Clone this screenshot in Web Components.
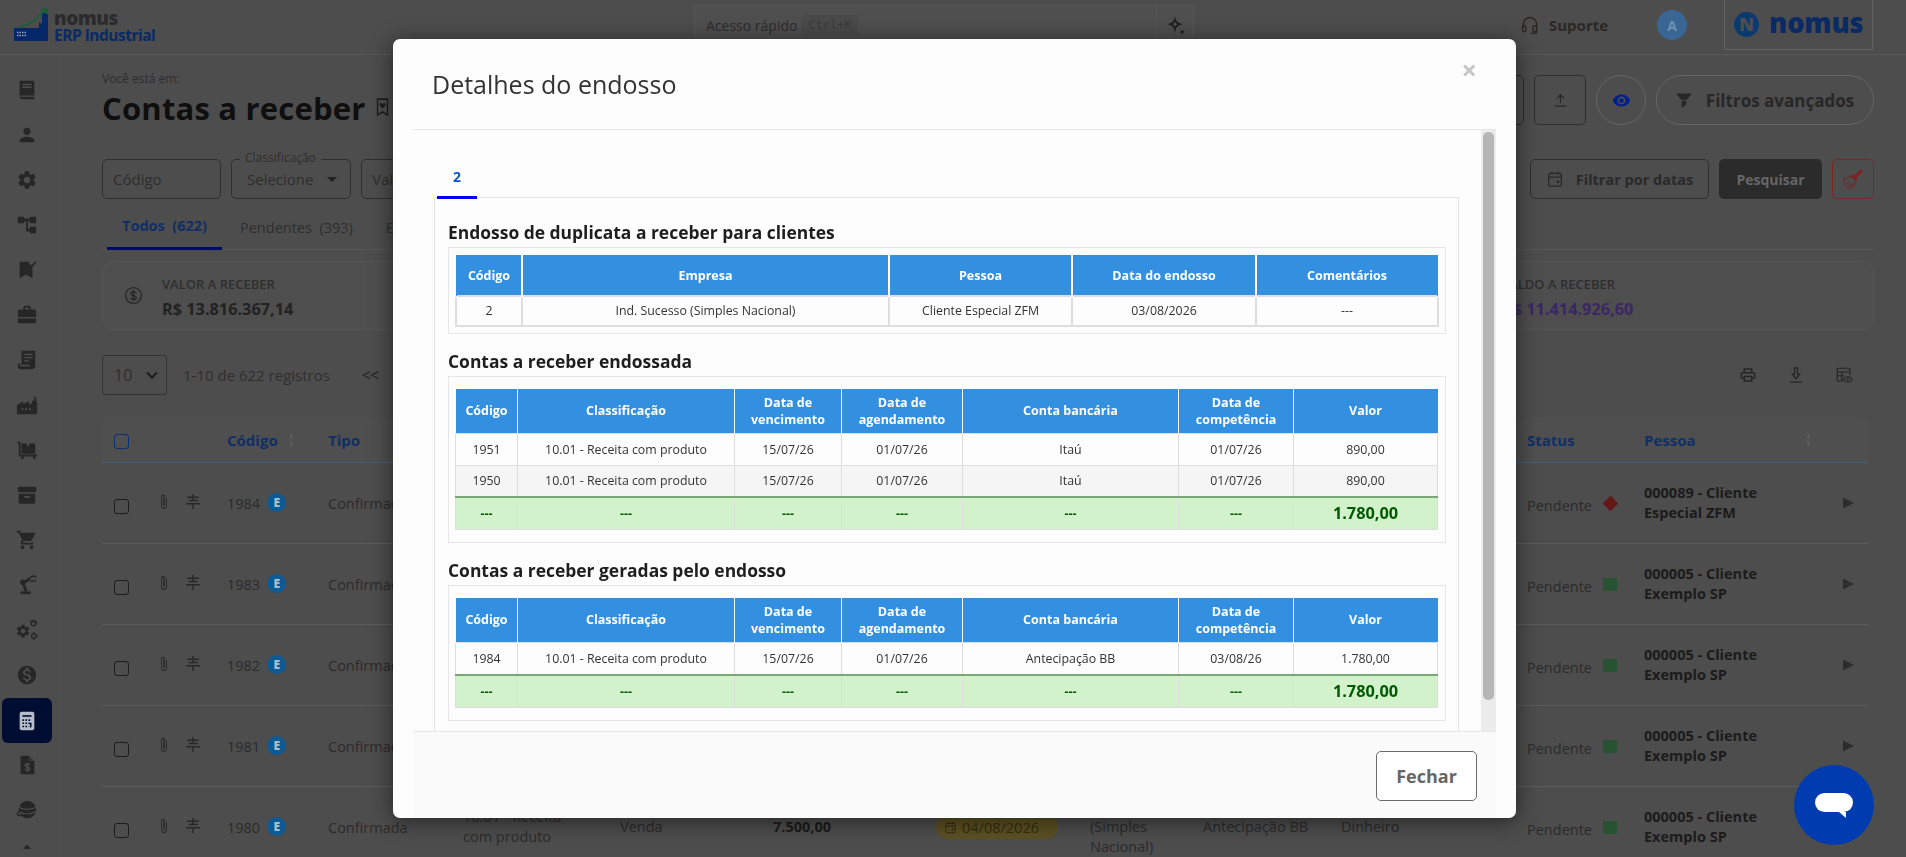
<!DOCTYPE html>
<html lang="pt-BR">
<head>
<meta charset="utf-8">
<title>Contas a receber</title>
<style>
  :root {
    --page: #4d4d4d;
    --line: #5a5a5a;
    --text: #2b2b2b;
    --strong: #1b1b1b;
    --navy: #0f2f66;
    --icon: #262626;
    font-family: "Open Sans", sans-serif;
  }
  html, body { margin: 0; height: 857px; overflow: hidden; background: var(--page); }
  nomus-app { font-family: "Open Sans", sans-serif; }
</style>
</head>
<body>

<nomus-app>
  <app-topbar slot="top"></app-topbar>
  <app-sidebar slot="side"></app-sidebar>

  <page-header></page-header>
  <filter-bar></filter-bar>
  <status-tabs></status-tabs>
  <summary-card></summary-card>
  <list-toolbar></list-toolbar>

  <receivable-table>
    <receivable-row code="1984" person="000089 - Cliente Especial ZFM" mark="diamond"></receivable-row>
    <receivable-row code="1983" person="000005 - Cliente Exemplo SP"></receivable-row>
    <receivable-row code="1982" person="000005 - Cliente Exemplo SP"></receivable-row>
    <receivable-row code="1981" person="000005 - Cliente Exemplo SP"></receivable-row>
    <receivable-row code="1980" person="000005 - Cliente Exemplo SP" full></receivable-row>
  </receivable-table>
</nomus-app>

<endosso-modal>
  <span slot="title">Detalhes do endosso</span>

  <endosso-section heading="Endosso de duplicata a receber para clientes" style="--pad:7px 7px 6px 6px">
    <endosso-table thick widths="66,367,183,184,182"
      head='["Código","Empresa","Pessoa","Data do endosso","Comentários"]'
      rows='[["2","Ind. Sucesso (Simples Nacional)","Cliente Especial ZFM","03/08/2026","---"]]'></endosso-table>
  </endosso-section>

  <endosso-section heading="Contas a receber endossada">
    <endosso-table widths="62,217,107,121,216,115,144"
      head='["Código","Classificação","Data de vencimento","Data de agendamento","Conta bancária","Data de competência","Valor"]'
      rows='[["1951","10.01 - Receita com produto","15/07/26","01/07/26","Itaú","01/07/26","890,00"],["1950","10.01 - Receita com produto","15/07/26","01/07/26","Itaú","01/07/26","890,00"]]'
      total="1.780,00"></endosso-table>
  </endosso-section>

  <endosso-section heading="Contas a receber geradas pelo endosso">
    <endosso-table widths="62,217,107,121,216,115,144"
      head='["Código","Classificação","Data de vencimento","Data de agendamento","Conta bancária","Data de competência","Valor"]'
      rows='[["1984","10.01 - Receita com produto","15/07/26","01/07/26","Antecipação BB","03/08/26","1.780,00"]]'
      total="1.780,00"></endosso-table>
  </endosso-section>
</endosso-modal>

<chat-button></chat-button>

<script>
const ICONS = {
  book: '<path fill="currentColor" d="M5 2h14a1 1 0 0 1 1 1v18a1 1 0 0 1-1 1H6a2.4 2.4 0 0 1-2-2V3a1 1 0 0 1 1-1z"/><path stroke="#4d4d4d" stroke-width="1.4" fill="none" d="M7 6h10M7 9h10M4.5 18.6H20"/>',
  person: '<path fill="currentColor" d="M12 12c2.21 0 4-1.79 4-4s-1.79-4-4-4-4 1.79-4 4 1.79 4 4 4zm0 2c-2.67 0-8 1.34-8 4v2h16v-2c0-2.66-5.33-4-8-4z"/>',
  gear: '<path fill="currentColor" d="M19.14 12.94c.04-.3.06-.61.06-.94 0-.32-.02-.64-.07-.94l2.03-1.58c.18-.14.23-.41.12-.61l-1.92-3.32c-.12-.22-.37-.29-.59-.22l-2.39.96c-.5-.38-1.03-.7-1.62-.94l-.36-2.54c-.04-.24-.24-.41-.48-.41h-3.84c-.24 0-.43.17-.47.41l-.36 2.54c-.59.24-1.13.57-1.62.94l-2.39-.96c-.22-.08-.47 0-.59.22L2.74 8.87c-.12.21-.08.47.12.61l2.03 1.58c-.05.3-.09.63-.09.94s.02.64.07.94l-2.03 1.58c-.18.14-.23.41-.12.61l1.92 3.32c.12.22.37.29.59.22l2.39-.96c.5.38 1.03.7 1.62.94l.36 2.54c.05.24.24.41.48.41h3.84c.24 0 .44-.17.47-.41l.36-2.54c.59-.24 1.13-.56 1.62-.94l2.39.96c.22.08.47 0 .59-.22l1.92-3.32c.12-.22.07-.47-.12-.61l-2.01-1.58zM12 15.6c-1.98 0-3.6-1.62-3.6-3.6s1.62-3.6 3.6-3.6 3.6 1.62 3.6 3.6-1.62 3.6-3.6 3.6z"/>',
  tree: '<path fill="currentColor" d="M2 4a1 1 0 0 1 1-1h5a1 1 0 0 1 1 1v1h6V4a1 1 0 0 1 1-1h5a1 1 0 0 1 1 1v5a1 1 0 0 1-1 1h-5a1 1 0 0 1-1-1V8h-2v8h2v-1a1 1 0 0 1 1-1h5a1 1 0 0 1 1 1v5a1 1 0 0 1-1 1h-5a1 1 0 0 1-1-1v-1h-4V8H9v1a1 1 0 0 1-1 1H3a1 1 0 0 1-1-1z"/>',
  bookcheck: '<path fill="currentColor" d="M4 3h10v3l3 4h1v11l-7-4-7 4z"/><path fill="none" stroke="currentColor" stroke-width="2" d="M14.5 6l2.5 2.5L21.5 3"/>',
  work: '<path fill="currentColor" d="M20 6h-4V4c0-1.1-.9-2-2-2h-4c-1.1 0-2 .9-2 2v2H4c-1.1 0-2 .9-2 2v11c0 1.1.9 2 2 2h16c1.1 0 2-.9 2-2V8c0-1.1-.9-2-2-2zm-6 0h-4V4h4v2z"/><path stroke="#4d4d4d" stroke-width="1.5" d="M2 15h20"/>',
  receipt: '<path fill="currentColor" d="M6 2h15v16a4 4 0 0 1-4 4H5a3 3 0 0 1-3-3v-3h4z"/><path stroke="#4d4d4d" stroke-width="1.4" fill="none" d="M9 6h9M9 9.5h9M9 13h5M4 18h11"/>',
  factory: '<path fill="currentColor" d="M1 22v-9a2 2 0 0 1 2-2l5-3v3l6-3v3h3l1-4h2V3h2v4l1 4v11z"/><path stroke="#4d4d4d" stroke-width="2" stroke-dasharray="2 2" d="M6 16.5h10"/>',
  trolley: '<path fill="none" stroke="currentColor" stroke-width="2" d="M1.5 4H4v14h19"/><path fill="currentColor" d="M6 5h6v3h2V5h7v11H6z"/><circle cx="7" cy="20.5" r="1.6" fill="currentColor"/><circle cx="20" cy="20.5" r="1.6" fill="currentColor"/>',
  archive: '<rect fill="currentColor" x="2" y="3" width="20" height="6" rx="1.5"/><path fill="currentColor" d="M3 10.5h18V20a1.5 1.5 0 0 1-1.5 1.5h-15A1.5 1.5 0 0 1 3 20z"/><path stroke="#4d4d4d" stroke-width="2" d="M9 14h6"/>',
  cart: '<path fill="currentColor" d="M7 18c-1.1 0-1.99.9-1.99 2S5.9 22 7 22s2-.9 2-2-.9-2-2-2zM1 2v2h2l3.6 7.59-1.35 2.45c-.16.28-.25.61-.25.96 0 1.1.9 2 2 2h12v-2H7.42c-.14 0-.25-.11-.25-.25l.03-.12.9-1.63h7.45c.75 0 1.41-.41 1.75-1.03l3.58-6.49c.08-.14.12-.31.12-.48 0-.55-.45-1-1-1H5.21l-.94-2H1zm16 16c-1.1 0-1.99.9-1.99 2s.89 2 1.99 2 2-.9 2-2-.9-2-2-2z"/>',
  robot: '<path fill="currentColor" d="M5 19h11v3H5z"/><path fill="none" stroke="currentColor" stroke-width="3.2" d="M11 19L8 10l7-5"/><circle cx="7.5" cy="9" r="3" fill="currentColor"/><path fill="none" stroke="currentColor" stroke-width="1.6" d="M15 5c1-3 5-3.5 7-1.5M15.5 7.5c2 1 5 .5 6-1"/>',
  gears: '<g transform="translate(-1 4.5) scale(.72)"><path fill="currentColor" d="M19.14 12.94c.04-.3.06-.61.06-.94 0-.32-.02-.64-.07-.94l2.03-1.58c.18-.14.23-.41.12-.61l-1.92-3.32c-.12-.22-.37-.29-.59-.22l-2.39.96c-.5-.38-1.03-.7-1.62-.94l-.36-2.54c-.04-.24-.24-.41-.48-.41h-3.84c-.24 0-.43.17-.47.41l-.36 2.54c-.59.24-1.13.57-1.62.94l-2.39-.96c-.22-.08-.47 0-.59.22L2.74 8.87c-.12.21-.08.47.12.61l2.03 1.58c-.05.3-.09.63-.09.94s.02.64.07.94l-2.03 1.58c-.18.14-.23.41-.12.61l1.92 3.32c.12.22.37.29.59.22l2.39-.96c.5.38 1.03.7 1.62.94l.36 2.54c.05.24.24.41.48.41h3.84c.24 0 .44-.17.47-.41l.36-2.54c.59-.24 1.13-.56 1.62-.94l2.39.96c.22.08.47 0 .59-.22l1.92-3.32c.12-.22.07-.47-.12-.61l-2.01-1.58zM12 15.6c-1.98 0-3.6-1.62-3.6-3.6s1.62-3.6 3.6-3.6 3.6 1.62 3.6 3.6-1.62 3.6-3.6 3.6z"/></g><g fill="none" stroke="currentColor" stroke-width="1.5"><circle cx="19" cy="5" r="2.5"/><circle cx="19.5" cy="18.5" r="2.5"/><path stroke-dasharray="1.5 1.5" stroke-width="2" d="M19 .8v1M23 5h-1M16 2l.8.8M22 2l-.8.8M19.5 14.5v1M23.5 18.5h-1M19.5 22.5v-1"/></g>',
  dollar: '<path fill="currentColor" d="M12 2C6.48 2 2 6.48 2 12s4.48 10 10 10 10-4.48 10-10S17.52 2 12 2zm1.41 16.09V20h-2.67v-1.93c-1.71-.36-3.16-1.46-3.27-3.4h1.96c.1 1.05.82 1.87 2.65 1.87 1.96 0 2.4-.98 2.4-1.59 0-.83-.44-1.61-2.67-2.14-2.48-.6-4.18-1.62-4.18-3.67 0-1.72 1.39-2.84 3.11-3.21V4h2.67v1.95c1.86.45 2.79 1.86 2.87 3.39H14.3c-.05-1.11-.64-1.87-2.22-1.87-1.5 0-2.4.68-2.4 1.64 0 .84.65 1.39 2.67 1.91s4.18 1.39 4.18 3.91c-.01 1.83-1.38 2.83-3.12 3.16z"/>',
  dollarline: '<circle cx="12" cy="12" r="10" fill="none" stroke="currentColor" stroke-width="1.6"/><path fill="none" stroke="currentColor" stroke-width="1.6" d="M15.5 9c-.3-1.5-1.7-2-3.5-2-2 0-3.3 1-3.3 2.5 0 3.5 6.8 1.8 6.8 5 0 1.5-1.4 2.5-3.5 2.5-2 0-3.4-.7-3.6-2.3M12 5v14"/>',
  calc: '<rect x="4" y="2" width="16" height="20" rx="2" fill="currentColor"/><path stroke="#000d33" stroke-width="1.8" fill="none" d="M7 6.5h10"/><path stroke="#000d33" stroke-width="1.8" stroke-dasharray="1.8 1.5" fill="none" d="M7 11h10M7 14.5h10M7 18h7"/><path stroke="#000d33" stroke-width="1.8" d="M16 14v5"/>',
  docdollar: '<path fill="currentColor" d="M6 2h8l6 6v13a1 1 0 0 1-1 1H6a1 1 0 0 1-1-1V3a1 1 0 0 1 1-1z"/><path fill="none" stroke="#4d4d4d" stroke-width="1.5" d="M15 12c-.5-1-1.5-1.3-2.5-1.3-1.5 0-2.5.7-2.5 1.8 0 2.4 5 1.2 5 3.4 0 1.1-1 1.8-2.5 1.8-1.1 0-2.2-.4-2.6-1.5M12.5 9.5v10"/><path fill="#4d4d4d" d="M14 2v6h6z" opacity=".45"/>',
  planet: '<circle cx="12.5" cy="11.5" r="9.5" fill="currentColor"/><path fill="none" stroke="#4d4d4d" stroke-width="1.5" d="M3 9c5 3 13 3 19 0M3.5 14c5 3 12 3 18.5-.5"/><path fill="none" stroke="currentColor" stroke-width="1.5" d="M4 13c-2.5 2-3 4-2 4.5 2 1 6 .5 11-1"/>',
  up: '<path fill="currentColor" d="M12 7l8 9H4z"/>',
  bookmarkheart: '<path fill="none" stroke="currentColor" stroke-width="2" d="M5 2.5h14v19l-7-3.5-7 3.5z"/><path fill="currentColor" d="M12 14l-3.7-3.6c-1.6-1.8.9-4.2 2.7-2.6l1 1 1-1c1.8-1.6 4.3.8 2.7 2.6z"/>',
  upload: '<path fill="none" stroke="currentColor" stroke-width="1.7" d="M12 16V4M7 9l5-5 5 5M4 20h16"/>',
  eye: '<path fill="currentColor" d="M12 4.5C7 4.5 2.73 7.61 1 12c1.73 4.39 6 7.5 11 7.5s9.27-3.11 11-7.5c-1.73-4.39-6-7.5-11-7.5zM12 17c-2.76 0-5-2.24-5-5s2.24-5 5-5 5 2.24 5 5-2.24 5-5 5zm0-8c-1.66 0-3 1.34-3 3s1.34 3 3 3 3-1.34 3-3-1.34-3-3-3z"/>',
  funnel: '<path fill="currentColor" d="M0 2h24l-8 9H8z"/><path fill="currentColor" d="M8.5 12.5h7v5l-7 5z"/>',
  calendar: '<g fill="none" stroke="currentColor" stroke-width="1.8"><rect x="3.5" y="4.5" width="17" height="17" rx="1.5"/><path d="M3.5 9.5h17M8 2v4M16 2v4"/></g><circle cx="16" cy="15.5" r="2" fill="currentColor"/>',
  broom: '<path fill="#7e2222" d="M14 7.5L20.5 1 23 3.5 16.5 10l.6 1.5-2.2 2.2-5-5L12.2 6.5z"/><path fill="none" stroke="#6c2c2c" stroke-width="1.2" d="M9.5 9C7 11 4 12 1 12c.5 4 4 10 8 11 3-2 5.5-5 6-9zM5 17l3-2M7.5 20.5l3-3.5M11 21l2-4"/>',
  headset: '<g fill="none" stroke="currentColor" stroke-width="1.8"><path d="M4 15v-4a8 8 0 0 1 16 0v4"/><rect x="3" y="13" width="4" height="7" rx="2"/><rect x="15.5" y="13" width="4.5" height="7" rx="2"/><path d="M20 18v2a2 2 0 0 1-2 2h-5"/></g>',
  sparkle: '<path fill="currentColor" d="M12 1c.7 6 2.5 8.5 9 10-6.5 1.5-8.3 4-9 11-.7-7-2.5-9.5-9-11 6.5-1.5 8.3-4 9-10z"/><path fill="#4d4d4d" d="M12 7c.4 2.5 1.2 3.4 3.5 4-2.3.6-3.1 1.5-3.5 4.5-.4-3-1.2-3.9-3.5-4.5 2.3-.6 3.1-1.5 3.5-4z"/><path fill="currentColor" d="M20 18h1.5v1.5H23V21h-1.5v1.5H20V21h-1.5v-1.5H20z"/>',
  print: '<path fill="currentColor" d="M19 8h-1V3H6v5H5c-1.66 0-3 1.34-3 3v6h4v4h12v-4h4v-6c0-1.66-1.34-3-3-3zM8 5h8v3H8V5zm8 12v2H8v-4h8v2zm2-2v-2H6v2H4v-4c0-.55.45-1 1-1h14c.55 0 1 .45 1 1v4h-2z"/>',
  download: '<path fill="none" stroke="currentColor" stroke-width="1.8" d="M10 2.5h4V11h3l-5 6-5-6h3zM4 21.5h16"/>',
  tableeye: '<g fill="none" stroke="currentColor" stroke-width="1.6"><path d="M11 20H4a1 1 0 0 1-1-1V4a1 1 0 0 1 1-1h15a1 1 0 0 1 1 1v8M3 8h17M3 13h9M9 8v12"/><path d="M11 18c3-4.5 9-4.5 12 0-3 4.5-9 4.5-12 0z"/></g><circle cx="17" cy="18" r="1.5" fill="currentColor"/>',
  clip: '<path fill="currentColor" d="M19 6v11a7 7 0 0 1-14 0V6a5 5 0 0 1 10 0v10.5a2.5 2.5 0 0 1-5 0V6h2v10.5a.5.5 0 0 0 1 0V6a3 3 0 0 0-6 0v11a5 5 0 0 0 10 0V6z"/>',
  signpost: '<path fill="none" stroke="currentColor" stroke-width="2.4" d="M12 0v5M2 5h20M5 10.5h15M0 15.5h24M12 15.5V24M12 5v5.5"/>',
  play: '<path fill="currentColor" d="M0 1l24 11L0 23z"/>',
  sort: '<path fill="currentColor" d="M12 2l5 8H7zM12 22l-5-8h10z"/>',
};

// small helper, every component goes through this
function define(tag, css, html) {
  customElements.define(tag, class extends HTMLElement {
    constructor() {
      super();
      this.attachShadow({ mode: 'open' });
    }
    connectedCallback() {
      const markup = typeof html === 'function' ? html(this) : html;
      this.shadowRoot.innerHTML = `<style>${css}</style>${markup}`;
    }
  });
}

define('ui-icon', `
  :host { display: inline-flex; width: var(--s, 20px); height: var(--h, var(--s, 20px)); flex: none; }
  svg { width: 100%; height: 100%; display: block; }
`, el => `<svg viewBox="0 0 24 24" preserveAspectRatio="none">${ICONS[el.getAttribute('name')] || ''}</svg>`);

define('nomus-app', `
  :host { display: grid; grid-template-columns: 61px 1fr; grid-template-rows: 55px 802px; width: 1906px; height: 857px; overflow: hidden; color: var(--text); }
  ::slotted([slot=top]) { grid-column: 1 / 3; }
  main { padding: 0 32px 0 41px; min-width: 0; overflow: hidden; }
`, `<slot name="top"></slot><slot name="side"></slot><main><slot></slot></main>`);

define('app-topbar', `
  :host { display: flex; align-items: flex-start; height: 55px; border-bottom: 1px solid #575757; box-sizing: border-box; }
  .brand { display: flex; gap: 6px; padding: 7px 0 0 14px; width: 680px; box-sizing: border-box; }
  .brand svg { width: 34px; height: 34px; }
  .names { display: flex; flex-direction: column; font-weight: 800; padding-top: 3px; }
  .nomus { font-size: 19px; color: #2b2b2b; letter-spacing: -.5px; line-height: 17px; }
  .erp { font-size: 15.5px; font-weight: 700; color: #082a66; letter-spacing: -.5px; line-height: 16px; }
  .quick { display: flex; width: 500px; height: 40px; margin: 5px 0 0 14px; border: 1px solid #555; border-radius: 4px; box-sizing: border-box; background: #4f4f4f; align-items: center; }
  .quick span { font-size: 14px; margin-left: 11px; color: #2c2c2c; }
  .quick code { font: 12px "DejaVu Sans Mono", monospace; color: #3a3a3a; background: #4a4a4a; margin-left: 5px; padding: 3px 6px; border-radius: 3px; }
  .star { margin-left: auto; width: 36px; height: 100%; border-left: 1px solid #555; display: flex; align-items: center; justify-content: center; color: #1d1d1d; }
  .support { display: flex; align-items: center; gap: 9px; margin: 15px 0 0 326px; font-size: 15px; font-weight: 700; color: #2b2723; --s: 20px; }
  .avatar { width: 30px; height: 30px; margin: 10px 0 0 49px; border-radius: 50%; background: #396694; color: #6f8fb0; display: flex; align-items: center; justify-content: center; font-size: 14px; font-weight: 700; }
  .mark { display: flex; align-items: center; gap: 10px; width: 149px; height: 50px; margin-left: 37px; border: 1px solid #636363; border-top: 0; box-sizing: border-box; padding-left: 9px; }
  .mark i { width: 25px; height: 25px; flex: none; border-radius: 50%; background: #0a3a70; color: #4d4d4d; font: 800 18px/25px "Open Sans", sans-serif; text-align: center; }
  .mark b { font-size: 27.3px; font-weight: 800; color: #0a2a63; letter-spacing: -.2px; line-height: 1; margin-top: -4px; }
`, `
  <div class="brand">
    <svg viewBox="0 0 34 34">
      <path fill="#06276a" d="M0 21h25v-6l3 2V6h6v28H0z"/>
      <path fill="none" stroke="#1d5e3a" stroke-width="1.8" d="M4 20C16 19 24 12 31 2"/>
      <path fill="#1d5e3a" d="M26 3l8-3v8z"/>
      <path stroke="#9aa4b8" stroke-width="1.5" stroke-dasharray="1.5 1" d="M3 25.5h10M3 28.5h10"/>
    </svg>
    <div class="names"><span class="nomus">nomus</span><span class="erp">ERP Industrial</span></div>
  </div>
  <div class="quick">
    <span>Acesso rápido</span><code>Ctrl+K</code>
    <div class="star"><ui-icon name="sparkle"></ui-icon></div>
  </div>
  <div class="support"><ui-icon name="headset"></ui-icon>Suporte</div>
  <div class="avatar">A</div>
  <div class="mark"><i>N</i><b>nomus</b></div>
`);

define('app-sidebar', `
  :host { display: flex; flex-direction: column; width: 61px; height: 802px; box-sizing: border-box; border-right: 1px solid #505050; padding-top: 12px; align-items: flex-start; overflow: hidden; color: var(--icon); }
  div { width: 50px; height: 45px; margin-left: 2px; flex: none; display: flex; align-items: center; justify-content: center; --s: 22px; }
  .on { background: #000d33; border-radius: 6px; color: #b6bcc9; margin-top: 1px; margin-bottom: -1px; }
  .up { --s: 12px; height: 30px; }
`, () => ['book', 'person', 'gear', 'tree', 'bookcheck', 'work', 'receipt', 'factory', 'trolley', 'archive', 'cart', 'robot', 'gears', 'dollar', 'calc', 'docdollar', 'planet']
  .map(n => `<div class="${n === 'calc' ? 'on' : ''}"><ui-icon name="${n}"></ui-icon></div>`).join('') + `<div class="up"><ui-icon name="up"></ui-icon></div>`);

define('page-header', `
  :host { display: flex; justify-content: space-between; height: 104px; box-sizing: border-box; }
  .where { font-size: 12px; color: #2e2e2e; margin-top: 15px; line-height: 18px; }
  h1 { margin: 0; font-size: 31px; font-weight: 700; color: #0f0f0f; line-height: 40px; display: flex; align-items: center; gap: 8px; --s: 17px; --h: 20px; letter-spacing: .2px; }
  h1 ui-icon { color: #1d1d1d; margin-top: -2px; }
  .acts { display: flex; gap: 10px; margin-top: 20px; height: 50px; }
  button { font: inherit; background: none; color: #262626; box-sizing: border-box; height: 50px; border: 1px solid #2e2e2e; display: flex; align-items: center; justify-content: center; padding: 0; }
  .sq { width: 52px; border-radius: 5px; --s: 17px; }
  .eye { width: 50px; border-radius: 50%; border-color: #666; color: #001f8f; --s: 19px; }
  .pill { width: 218px; border-radius: 25px; border-color: #666; gap: 14px; font-size: 17px; font-weight: 700; color: #272727; --s: 16px; --h: 17px; }
`, `
  <div>
    <div class="where">Você está em:</div>
    <h1>Contas a receber <ui-icon name="bookmarkheart"></ui-icon></h1>
  </div>
  <div class="acts">
    <button class="sq"></button>
    <button class="sq"><ui-icon name="upload"></ui-icon></button>
    <button class="eye"><ui-icon name="eye"></ui-icon></button>
    <button class="pill"><ui-icon name="funnel"></ui-icon>Filtros avançados</button>
  </div>
`);

define('filter-bar', `
  :host { display: flex; gap: 10px; height: 40px; font-size: 14px; color: #2e2e2e; }
  .f { position: relative; box-sizing: border-box; height: 40px; border: 1px solid #2f2f2f; border-radius: 5px; display: flex; align-items: center; }
  .code { width: 119px; padding-left: 10px; font-size: 15px; }
  .cls { width: 120px; padding-left: 15px; font-size: 15px; gap: 14px; }
  .cls legend { position: absolute; top: -9px; left: 8px; padding: 0 5px; background: var(--page); font-size: 12px; line-height: 14px; }
  .cls i { border: 5px solid transparent; border-top-color: #222; border-bottom: 0; }
  .val { width: 160px; padding-left: 10px; font-size: 15px; }
  .right { margin-left: auto; display: flex; gap: 10px; }
  .date { width: 179px; justify-content: center; gap: 12px; font-size: 14.5px; font-weight: 700; color: #2a2a2a; margin-left: 0; --s: 18px; }
  .search { width: 103px; background: #2b2b2b; border: 0; justify-content: center; font-weight: 700; color: #666; }
  .clear { width: 42px; border-color: #7a2626; justify-content: center; --s: 22px; }
`, `
  <div class="f code">Código</div>
  <div class="f cls"><legend>Classificação</legend>Selecione<i></i></div>
  <div class="f val">Valor</div>
  <div class="right">
    <div class="f date"><ui-icon name="calendar"></ui-icon>Filtrar por datas</div>
    <div class="f search">Pesquisar</div>
    <div class="f clear"><ui-icon name="broom"></ui-icon></div>
  </div>
`);

define('status-tabs', `
  :host { display: flex; height: 51px; border-bottom: 1px solid #565656; box-sizing: border-box; font-size: 14.5px; align-items: stretch; }
  div { display: flex; align-items: center; padding: 5px 16px 0; white-space: pre; box-sizing: border-box; height: 51px; color: #2f2f2f; }
  .on { width: 115px; margin-left: 5px; justify-content: center; padding: 5px 0 0; font-weight: 700; color: var(--navy); border-bottom: 3px solid #000a6b; }
  .p { margin-left: 2px; }
`, `<div class="on">Todos  (622)</div><div class="p">Pendentes  (393)</div><div style="padding-left:17px">Em aberto</div>`);

define('summary-card', `
  :host { display: flex; align-items: center; height: 69px; margin-top: 11px; box-sizing: border-box; border: 1px solid #565656; border-radius: 12px; background: #4e4e4e; padding-left: 21px; justify-content: space-between; }
  .item { display: flex; gap: 19px; align-items: center; --s: 19px; color: #262626; }
  .txt { padding-top: 6px; }
  .lbl { font-size: 13px; font-weight: 600; color: #2e2e2e; line-height: 18px; }
  .val { font-size: 16.3px; font-weight: 700; color: #222; line-height: 28px; margin-top: 2px; }
  .item.end { width: 371px; }
  .end .val { color: #3a2764; }
`, `
  <div class="item"><ui-icon name="dollarline"></ui-icon><div class="txt"><div class="lbl">VALOR A RECEBER</div><div class="val">R$ 13.816.367,14</div></div></div>
  <div class="item end"><div class="txt"><div class="lbl">SALDO A RECEBER</div><div class="val">R$ 11.414.926,60</div></div></div>
`);

define('list-toolbar', `
  :host { display: flex; align-items: center; height: 40px; margin-top: 25px; font-size: 15px; color: #2f2f2f; }
  .sel { box-sizing: border-box; width: 65px; height: 40px; border: 1px solid #333; border-radius: 3px; display: flex; align-items: center; justify-content: space-between; padding: 0 8px 0 11px; font-size: 16px; }
  .sel svg { width: 12px; height: 8px; }
  .count { margin-left: 16px; }
  .pg { margin-left: 32px; font-size: 16px; letter-spacing: -1px; color: #222; }
  .tools { margin-left: auto; display: flex; gap: 30px; padding-right: 21px; --s: 18px; color: #262626; }
`, `
  <div class="sel">10<svg viewBox="0 0 12 8"><path fill="none" stroke="#1c1c1c" stroke-width="2" d="M1 1.5l5 5 5-5"/></svg></div>
  <div class="count">1-10 de 622 registros</div>
  <div class="pg">&lt;&lt;</div>
  <div class="tools"><ui-icon name="print"></ui-icon><ui-icon name="download"></ui-icon><ui-icon name="tableeye"></ui-icon></div>
`);

define('receivable-table', `
  :host { display: block; width: 1766px; margin-top: 22px; --cols: 125px 101px 135px 157px 153px 163px 154px 113px 138px 186px 117px 224px; }
  .head { display: grid; grid-template-columns: var(--cols); height: 46px; align-items: center; background: #4f4f4f; border-bottom: 1px solid #3d628c; box-sizing: border-box; border-radius: 10px 10px 0 0; color: var(--navy); font-size: 15px; font-weight: 700; }
  .head > div { display: flex; align-items: center; }
  .cb { width: 15px; height: 15px; box-sizing: border-box; border: 1px solid #0a3070; border-radius: 3px; margin: 4px 0 0 12px; }
  .sort { --s: 9px; --h: 18px; color: #5c5c5c; margin-left: 9px; }
`, `
  <div class="head">
    <div><div class="cb"></div></div>
    <div>Código<ui-icon class="sort" name="sort"></ui-icon></div>
    <div>Tipo</div><div></div><div></div><div></div><div></div><div></div><div></div><div></div>
    <div>Status</div>
    <div>Pessoa<ui-icon class="sort" name="sort" style="margin-left:108px"></ui-icon></div>
  </div>
  <slot></slot>
`);

define('receivable-row', `
  :host { display: grid; grid-template-columns: var(--cols); height: 81px; align-items: center; border-bottom: 1px solid #5c5c5c; box-sizing: border-box; font-size: 14.5px; color: var(--text); }
  .first { display: flex; align-items: center; color: #282828; }
  .cb { width: 15px; height: 15px; box-sizing: border-box; border: 1px solid #1c1c1c; border-radius: 3px; margin: 6px 30px 0 12px; }
  .clip { --s: 10px; --h: 15px; margin: -4px 17px 0 0; }
  .sign { --s: 14px; --h: 15px; margin-top: -4px; }
  .code { display: flex; align-items: center; gap: 7px; }
  .e { width: 19px; height: 19px; border-radius: 50%; background: #0d5a94; color: #a9bccd; font-size: 12px; font-weight: 800; display: flex; align-items: center; justify-content: center; margin-top: -2px; }
  .lines { line-height: 20px; }
  .num { font-weight: 700; color: #1b1b1b; }
  .pill { display: flex; align-items: center; gap: 5px; width: 122px; height: 24px; box-sizing: border-box; padding-left: 8px; border-radius: 12px; background: #5c5124; color: #352d0c; --s: 13px; }
  .status { display: flex; align-items: center; gap: 10px; }
  .status span { margin-top: 4px; }
  .sq { width: 14px; height: 13px; background: #285333; margin-left: 1px; }
  .dia { width: 11px; height: 11px; background: #641818; transform: rotate(45deg); margin: 0 0 0 3px; }
  .person { display: flex; align-items: center; justify-content: space-between; padding-right: 14px; color: var(--strong); font-weight: 700; line-height: 20px; }
  .person div { width: 170px; }
  .person ui-icon { --s: 11px; --h: 12px; color: #2d2d2d; }
`, el => {
  const full = el.hasAttribute('full');
  const cell = t => `<div class="lines">${full ? t : ''}</div>`;
  return `
    <div class="first"><div class="cb"></div><ui-icon class="clip" name="clip"></ui-icon><ui-icon class="sign" name="signpost"></ui-icon></div>
    <div class="code">${el.getAttribute('code')}<span class="e">E</span></div>
    <div>Confirmada</div>
    ${cell('10.01 - Receita<br>com produto')}
    ${cell('Venda')}
    ${full ? '<div class="lines num">7.500,00</div>' : '<div></div>'}
    ${full ? '<div class="pill"><ui-icon name="calendar"></ui-icon>04/08/2026</div>' : '<div></div>'}
    ${cell('Ind. Sucesso<br>(Simples<br>Nacional)')}
    ${cell('Antecipação BB')}
    ${cell('Dinheiro')}
    <div class="status"><span>Pendente</span><div class="${el.getAttribute('mark') === 'diamond' ? 'dia' : 'sq'}"></div></div>
    <div class="person"><div>${el.getAttribute('person')}</div><ui-icon name="play"></ui-icon></div>
  `;
});

define('endosso-modal', `
  :host { position: fixed; inset: 0; display: block; padding: 39px 0 0 393px; box-sizing: border-box; font-family: "Open Sans", sans-serif; }
  .box { width: 1123px; height: 779px; box-sizing: border-box; padding: 0 20px; background: #fdfdfd; border-radius: 7px; box-shadow: 0 3px 22px rgba(0,0,0,.55); display: flex; flex-direction: column; }
  header { height: 91px; flex: none; box-sizing: border-box; border-bottom: 1px solid #e6e6e6; display: flex; justify-content: space-between; }
  h2 { margin: 29px 0 0 19px; font-size: 25px; font-weight: 400; color: #333; line-height: 32px; }
  .close { font-size: 27px; font-weight: 700; color: #c6c6c6; line-height: 24px; margin: 19px 19px 0 0; }
  .mid { flex: none; height: 601px; display: flex; overflow: hidden; }
  .scroll { width: 1068px; padding: 0 22px 0 21px; box-sizing: border-box; overflow: hidden; }
  .tab { width: 40px; height: 69px; margin-left: 3px; box-sizing: border-box; padding-top: 37px; text-align: center; font-size: 14px; line-height: 20px; font-weight: 700; color: #0b55d0; border-bottom: 3px solid #0000f0; position: relative; margin-bottom: -2px; }
  .panel { border: 1px solid #e3e3e3; padding: 23px 12px 40px 13px; min-height: 600px; box-sizing: border-box; }
  .track { width: 15px; background: #ececec; padding: 2px 2px 0; box-sizing: border-box; }
  .thumb { height: 568px; background: #b6b6b6; border-radius: 5px; }
  footer { flex: 1; background: #fafafa; border-top: 1px solid #e6e6e6; display: flex; justify-content: flex-end; align-items: flex-start; padding: 19px 19px 0 0; }
  button { font: 700 18px "Open Sans", sans-serif; color: #666; width: 101px; height: 50px; background: #fff; border: 1px solid #6b6b6b; border-radius: 5px; padding: 0; }
`, `
  <div class="box">
    <header><h2><slot name="title"></slot></h2><div class="close">×</div></header>
    <div class="mid">
      <div class="scroll">
        <div class="tab">2</div>
        <div class="panel"><slot></slot></div>
      </div>
      <div class="track"><div class="thumb"></div></div>
    </div>
    <footer><button>Fechar</button></footer>
  </div>
`);

define('endosso-section', `
  :host { display: block; }
  h3 { margin: 0 0 4px; font-size: 17.45px; font-weight: 700; line-height: 22px; color: #1e1e1e; }
  .box { border: 1px solid #e6e6e6; padding: var(--pad, 12px 7px 12px 6px); margin-bottom: 16px; }
`, el => `<h3>${el.getAttribute('heading')}</h3><div class="box"><slot></slot></div>`);

define('endosso-table', `
  :host { display: block; font-size: 12.35px; color: #333; }
  table { border-collapse: collapse; table-layout: fixed; width: 982px; }
  th { background: #3390e0; color: #fff; font-size: 12.5px; font-weight: 700; line-height: 17px; padding: 0 6px; height: 44px; border-left: 1px solid #fff; border-right: 1px solid #fff; box-sizing: border-box; }
  th:first-child { border-left-color: transparent; }
  th:last-child { border-right-color: transparent; }
  td { text-align: center; line-height: 17px; padding: 6px 4px 7px; border: 1px solid #dedede; }
  tbody tr:first-child td { padding-top: 7px; }
  tbody tr:nth-child(even) td { background: #f5f5f5; }
  .thick th { border-width: 0 2px; height: 41px; }
  .thick td, .thick tbody tr:first-child td { border-width: 2px; padding: 5px 4px 6px; }
  tfoot td { background: #d2f2cb; color: #005a00; font-weight: 700; height: 33px; padding: 0 4px; border-top: 2px solid #7ba776; box-sizing: border-box; }
  tfoot td:last-child { font-size: 16.3px; }
`, el => {
  const head = JSON.parse(el.getAttribute('head'));
  const rows = JSON.parse(el.getAttribute('rows'));
  const widths = el.getAttribute('widths').split(',');
  const total = el.getAttribute('total');
  const foot = total ? `<tfoot><tr>${head.map((h, i) => `<td>${i === head.length - 1 ? total : '---'}</td>`).join('')}</tr></tfoot>` : '';
  return `<table class="${el.hasAttribute('thick') ? 'thick' : ''}">
    <colgroup>${widths.map(w => `<col style="width:${w}px">`).join('')}</colgroup>
    <thead><tr>${head.map(h => `<th>${h}</th>`).join('')}</tr></thead>
    <tbody>${rows.map(r => `<tr>${r.map(c => `<td>${c}</td>`).join('')}</tr>`).join('')}</tbody>
    ${foot}
  </table>`;
});

define('chat-button', `
  :host { position: fixed; right: 32px; bottom: 12px; width: 80px; height: 80px; border-radius: 50%; background: #003cb0; display: flex; align-items: center; justify-content: center; }
  svg { width: 40px; height: 28px; margin-top: 2px; }
`, `<svg viewBox="0 0 40 28"><rect x="1" y="1" width="38" height="19" rx="9.5" fill="#fff"/><path fill="#fff" d="M25 20h7v6z"/></svg>`);
</script>
</body>
</html>
